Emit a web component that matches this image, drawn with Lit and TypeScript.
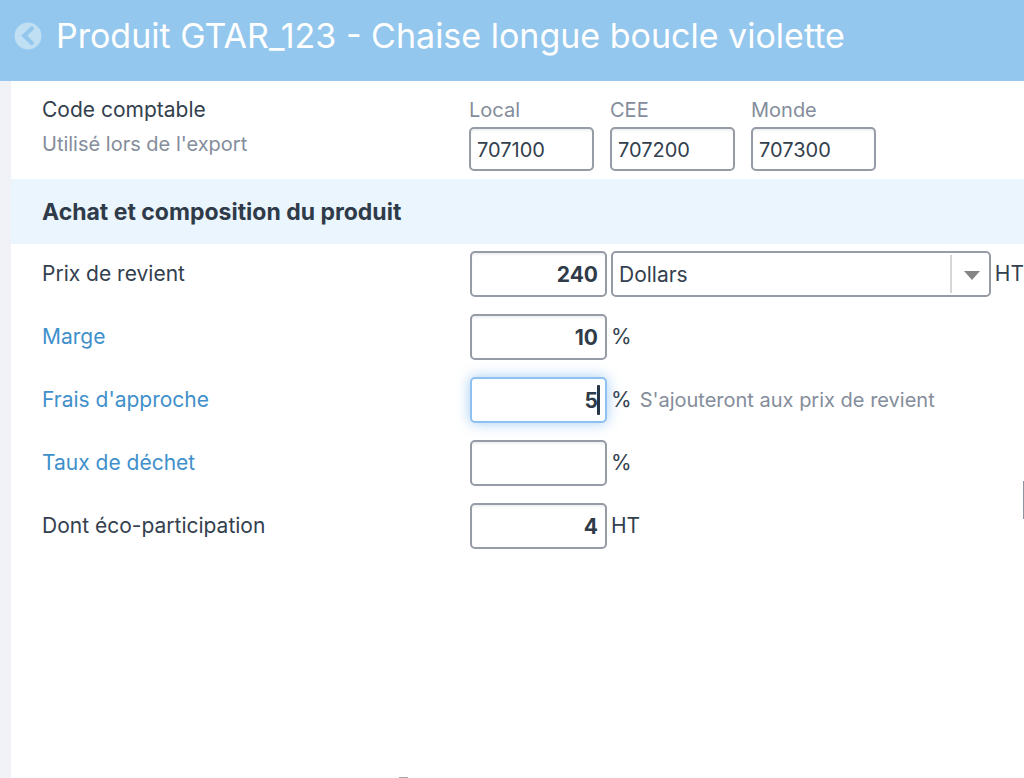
import { LitElement, html, css, nothing } from "lit";
import { customElement } from "lit/decorators.js";

interface Rate {
  id: string;
  label: string;
  value: string;
  unit: string;
  link?: boolean;
  active?: boolean;
  note?: string;
}

const accounts = [
  { id: "local", label: "Local", value: "707100" },
  { id: "cee", label: "CEE", value: "707200" },
  { id: "monde", label: "Monde", value: "707300" },
];

const rates: Rate[] = [
  { id: "marge", label: "Marge", value: "10", unit: "%", link: true },
  { id: "frais", label: "Frais d'approche", value: "5", unit: "%", link: true, active: true, note: "S'ajouteront aux prix de revient" },
  { id: "dechet", label: "Taux de déchet", value: "", unit: "%", link: true },
  { id: "eco", label: "Dont éco-participation", value: "4", unit: "HT" },
];

@customElement("app-root")
export class AppRoot extends LitElement {
  static styles = css`
    :host {
      display: flex;
      flex-direction: column;
      position: relative;
      min-height: 100vh;
      overflow: hidden;
      background: #f0f2f7;
      color: #33404e;
      font: 400 21px/28px Inter, sans-serif;
    }
    .header {
      display: flex;
      align-items: center;
      gap: 14px;
      box-sizing: border-box;
      min-height: 81px;
      padding: 0 14px 9px;
      background: #94c7ed;
      color: #fff;
    }
    .back {
      display: block;
      width: 28px;
      height: 28px;
      padding: 0;
      border: 0;
      background: none;
      cursor: pointer;
    }
    .back svg {
      display: block;
    }
    h1 {
      margin: 0;
      font-size: 34px;
      line-height: 44px;
      font-weight: 400;
      white-space: nowrap;
    }
    .sheet {
      flex: 1;
      margin-left: 11px;
      background: #fff;
    }
    .row {
      display: grid;
      grid-template-columns: 427px 1fr;
      padding-left: 31px;
    }
    .accounting {
      padding: 15px 0 8px 31px;
    }
    .hint {
      margin-top: 6px;
    }
    .hint,
    .note,
    .account label {
      color: #848d9b;
      font-size: 20px;
    }
    .accounts {
      display: flex;
      gap: 16px;
    }
    .account label {
      display: block;
      margin-bottom: 3px;
    }
    input,
    select {
      display: block;
      box-sizing: border-box;
      margin: 0;
      border: 2px solid #959ca6;
      border-radius: 5px;
      outline: none;
      background: #fff;
      color: #33404e;
    }
    input {
      box-shadow: inset 0 2px 2px #f0f1f3;
    }
    .account input {
      width: 125px;
      height: 44px;
      padding: 2px 6px 0;
      font: 400 20px Inter, sans-serif;
    }
    h2 {
      margin: 0;
      padding: 19px 31px 18px;
      background: #eaf5fe;
      color: #2f3b49;
      font-size: 23px;
      line-height: 28px;
      font-weight: 700;
    }
    .prices {
      display: grid;
      gap: 17px;
      padding-top: 7px;
    }
    .prices .row {
      align-items: center;
    }
    .link {
      color: #3f90cb;
      text-decoration: none;
    }
    .control {
      display: flex;
      align-items: center;
      gap: 4px;
      padding-left: 1px;
    }
    .amount {
      position: relative;
      flex: none;
      width: 137px;
    }
    .amount input {
      width: 100%;
      height: 46px;
      padding: 0 7px;
      color: #2f3b49;
      font: 700 21px Inter, sans-serif;
      text-align: right;
    }
    .amount .active {
      border-color: #8fc1f0;
      box-shadow: 0 0 14px rgba(100, 170, 235, 0.6);
      caret-color: transparent;
    }
    .caret {
      position: absolute;
      top: 8px;
      right: 7px;
      width: 3px;
      height: 30px;
      border-radius: 1px;
      background: #263545;
    }
    .note {
      margin-left: 4px;
    }
    .currency {
      position: relative;
      flex: 1;
    }
    .currency select {
      width: 100%;
      height: 46px;
      padding: 0 44px 0 6px;
      appearance: none;
      font: 400 21px Inter, sans-serif;
    }
    .arrow {
      position: absolute;
      top: 4px;
      bottom: 4px;
      right: 2px;
      display: grid;
      place-items: center;
      box-sizing: border-box;
      width: 39px;
      padding: 2px 0 0 4px;
      border-left: 2px solid #d6d6d6;
      pointer-events: none;
    }
    .edge-right {
      position: absolute;
      right: 0;
      top: 481px;
      width: 1px;
      height: 38px;
      background: #8e95a0;
    }
    .edge-bottom {
      position: absolute;
      left: 399px;
      bottom: 0;
      width: 9px;
      height: 1px;
      background: #a5a5a5;
    }
  `;

  private amount(id: string, value: string, active = false) {
    return html`
      <div class="amount">
        <input id=${id} class=${active ? "active" : ""} type="text" inputmode="decimal" .value=${value} />
        ${active ? html`<span class="caret"></span>` : nothing}
      </div>
    `;
  }

  render() {
    return html`
      <header class="header">
        <button class="back" aria-label="Retour">
          <svg width="28" height="28" viewBox="0 0 28 28">
            <circle cx="14" cy="14" r="13.5" fill="#c0dff3" />
            <path d="M16.8 6.9 9.2 14.2 16.8 21.5" transform="translate(1 -0.4)" fill="none" stroke="#94c7ed" stroke-width="4.2" stroke-linecap="round" />
          </svg>
        </button>
        <h1>Produit GTAR_123 - Chaise longue boucle violette</h1>
      </header>
      <main class="sheet">
        <section class="row accounting">
          <div>
            <div>Code comptable</div>
            <div class="hint">Utilisé lors de l'export</div>
          </div>
          <div class="accounts">
            ${accounts.map((a) => html`
              <div class="account">
                <label for=${a.id}>${a.label}</label>
                <input id=${a.id} type="text" .value=${a.value} />
              </div>
            `)}
          </div>
        </section>
        <h2>Achat et composition du produit</h2>
        <section class="prices">
          <div class="row">
            <label for="prix">Prix de revient</label>
            <div class="control">
              ${this.amount("prix", "240")}
              <div class="currency">
                <select aria-label="Devise">
                  <option>Dollars</option>
                </select>
                <span class="arrow">
                  <svg width="16" height="9" viewBox="0 0 16 9"><path d="M0 0H16L8 9Z" fill="#858585" /></svg>
                </span>
              </div>
              <span>HT</span>
            </div>
          </div>
          ${rates.map((r) => html`
            <div class="row">
              <label for=${r.id}>${r.link ? html`<a class="link" href="#${r.id}">${r.label}</a>` : r.label}</label>
              <div class="control">
                ${this.amount(r.id, r.value, r.active)}
                <span>${r.unit}</span>
                ${r.note ? html`<span class="note">${r.note}</span>` : nothing}
              </div>
            </div>
          `)}
        </section>
      </main>
      <span class="edge-right"></span>
      <span class="edge-bottom"></span>
    `;
  }
}
